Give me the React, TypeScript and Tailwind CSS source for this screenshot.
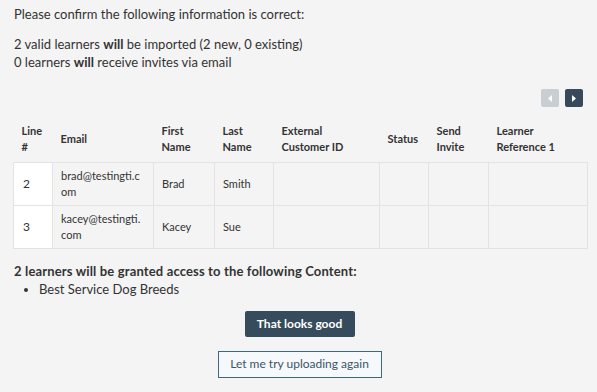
const columns = [
  { label: 'Line #', w: 'w-[39px]' },
  { label: 'Email', w: 'w-[101px]' },
  { label: 'First Name', w: 'w-[61px]' },
  { label: 'Last Name', w: 'w-[59px]' },
  { label: 'External Customer ID', w: 'w-[106px]' },
  { label: 'Status', w: 'w-[49px]' },
  { label: 'Send Invite', w: 'w-[60px]' },
  { label: 'Learner Reference 1', w: 'w-[99px]' },
];

const rows = [
  { line: '2', email: 'brad@testingti.com', first: 'Brad', last: 'Smith' },
  { line: '3', email: 'kacey@testingti.com', first: 'Kacey', last: 'Sue' },
];

export default function App() {
  return (
    <div className="min-h-screen w-[597px] h-[392px] bg-[#f4f4f4] text-[#333] text-[13px] leading-[18px] font-['Lato','Liberation_Sans',sans-serif] px-[13px] pt-[5px] overflow-hidden">
      <p className="pl-px">Please confirm the following information is correct:</p>

      <div className="mt-[12px] pl-px">
        <p>
          2 valid learners <b>will</b> be imported (2 new, 0 existing)
        </p>
        <p>
          0 learners <b>will</b> receive invites via email
        </p>
      </div>

      {/* Pagination */}
      <div className="flex justify-end gap-[6px] mt-[18px] pr-px">
        <button className="w-[18px] h-[18px] rounded-[2px] bg-[#c9ced3] flex items-center justify-center">
          <svg width="4" height="7" viewBox="0 0 4 7">
            <path d="M4 0 L0 3.5 L4 7 Z" fill="#ffffff" />
          </svg>
        </button>
        <button className="w-[18px] h-[18px] rounded-[2px] bg-[#364a5c] flex items-center justify-center">
          <svg width="4" height="7" viewBox="0 0 4 7">
            <path d="M0 0 L4 3.5 L0 7 Z" fill="#ffffff" />
          </svg>
        </button>
      </div>

      {/* Table */}
      <table className="mt-[13px] w-[574px] table-fixed border-collapse text-[11px] leading-[16px]">
        <thead>
          <tr className="h-[42px]">
            {columns.map((c) => (
              <th key={c.label} className={`${c.w} text-left align-middle font-bold px-[8px] pb-[3px] text-[#333]`}>
                {c.label}
              </th>
            ))}
          </tr>
        </thead>
        <tbody>
          {rows.map((r) => (
            <tr key={r.line} className="h-[43px]">
              <td className="bg-white border border-[#e3e3e3] px-[9px] text-[12px]">{r.line}</td>
              <td className="border border-[#e3e3e3] px-[8px] break-all">{r.email}</td>
              <td className="border border-[#e3e3e3] px-[8px]">{r.first}</td>
              <td className="border border-[#e3e3e3] px-[8px]">{r.last}</td>
              <td className="border border-[#e3e3e3]"></td>
              <td className="border border-[#e3e3e3]"></td>
              <td className="border border-[#e3e3e3]"></td>
              <td className="border border-[#e3e3e3]"></td>
            </tr>
          ))}
        </tbody>
      </table>

      <p className="mt-[13px] pl-px font-bold tracking-[0.15px]">2 learners will be granted access to the following Content:</p>
      <ul className="list-disc pl-[26px]">
        <li>Best Service Dog Breeds</li>
      </ul>

      <div className="flex flex-col items-center mt-[13px] pl-[2px]">
        <button className="h-[26px] w-[110px] rounded-[2px] bg-[#364b5b] text-white font-bold text-[12px]">
          That looks good
        </button>
        <button className="mt-[14px] h-[27px] w-[164px] border border-[#3d6878] bg-[#f6f9fc] text-[#3b5666] text-[12px]">
          Let me try uploading again
        </button>
      </div>
    </div>
  );
}
